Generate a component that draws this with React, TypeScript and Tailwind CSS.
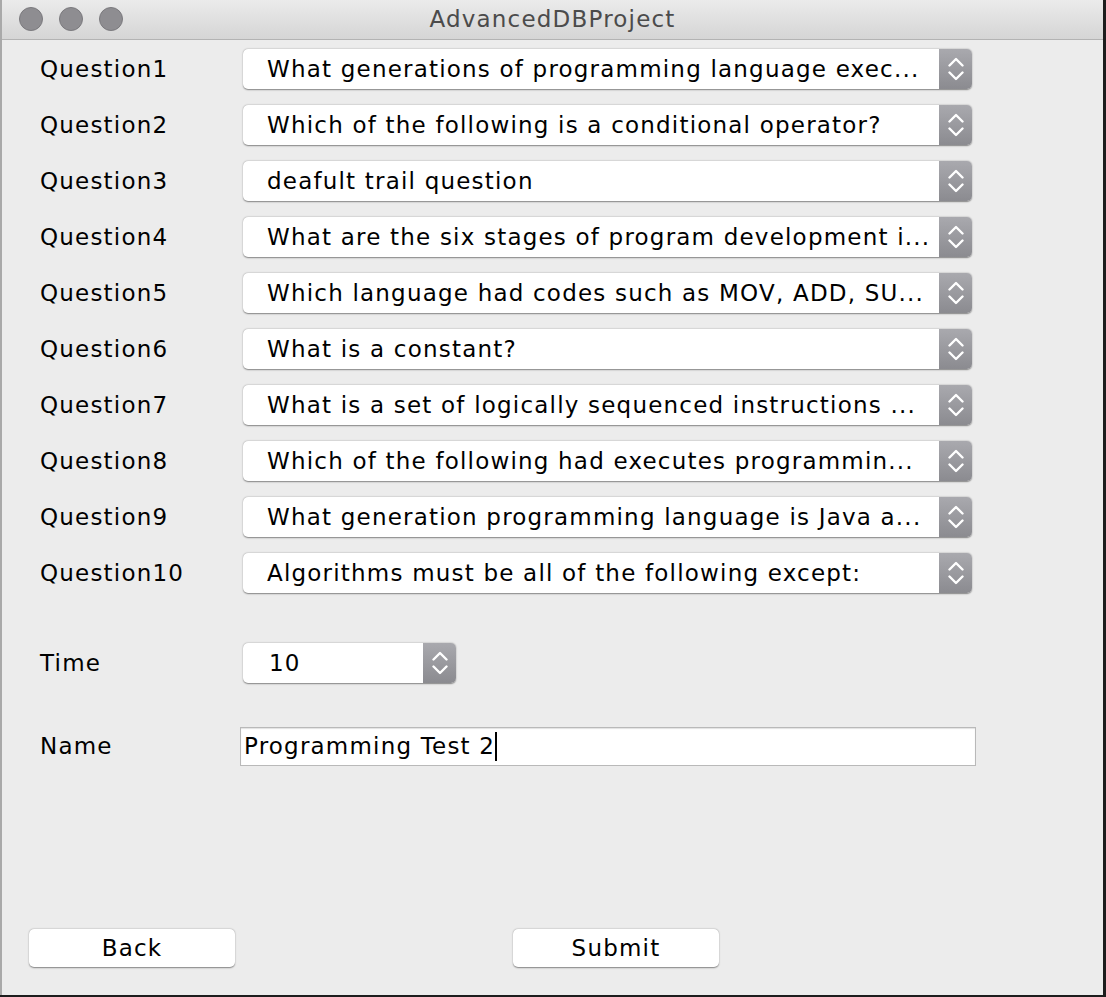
import React from 'react'

const questions = [
  'What generations of programming language exec...',
  'Which of the following is a conditional operator?',
  'deafult trail question',
  'What are the six stages of program development i...',
  'Which language had codes such as MOV, ADD, SU...',
  'What is a constant?',
  'What is a set of logically sequenced instructions ...',
  'Which of the following had executes programmin...',
  'What generation programming language is Java a...',
  'Algorithms must be all of the following except:',
]

function Arrows() {
  return (
    <svg width="16" height="26" viewBox="0 0 16 26" fill="none">
      <path d="M1.5 9.5 L8 3 L14.5 9.5" stroke="white" strokeWidth="2.4" strokeLinecap="round" strokeLinejoin="round" />
      <path d="M1.5 16.5 L8 23 L14.5 16.5" stroke="white" strokeWidth="2.4" strokeLinecap="round" strokeLinejoin="round" />
    </svg>
  )
}

function Combo({ value, width, pad }: { value: string; width: string; pad: string }) {
  return (
    <div
      className={`flex h-10 ${width} overflow-hidden rounded-[5px] bg-white shadow-[0_0.5px_1.5px_rgba(0,0,0,0.45)]`}
    >
      <div className={`flex min-w-0 flex-1 items-center ${pad} whitespace-nowrap text-black`}>{value}</div>
      <div className="flex w-[33px] items-center justify-center bg-gradient-to-b from-[#a9a9ae] to-[#8b8b90]">
        <Arrows />
      </div>
    </div>
  )
}

function Light() {
  return <div className="size-6 rounded-full border border-[#7b7a7e] bg-[#8e8d91]" />
}

export default function App() {
  return (
    <div className="h-[997px] w-[1106px] bg-[#1d1d1d] font-['DejaVu_Sans',sans-serif] text-[23px] tracking-[1.2px]">
      <div className="flex h-[995px] w-[1103px] flex-col border-l-[2px] border-[#a9a9a9] bg-[#ececec]">
        <div className="relative flex h-10 shrink-0 items-center justify-center border-b border-[#b3b3b3] bg-gradient-to-b from-[#ebebeb] to-[#d5d5d5]">
          <div className="absolute left-[17px] top-[7px] flex gap-4">
            <Light />
            <Light />
            <Light />
          </div>
          <span className="text-[#4b4b4b]">AdvancedDBProject</span>
        </div>

        <div className="flex flex-1 flex-col pl-[38px] pt-[9px]">
          <div className="flex flex-col gap-4">
            {questions.map((q, i) => (
              <div key={i} className="flex items-center">
                <div className="w-[203px] text-black">Question{i + 1}</div>
                <Combo value={q} width="w-[729px]" pad="pl-[24px]" />
              </div>
            ))}
          </div>

          <div className="mt-[50px] flex items-center">
            <div className="w-[203px] text-black">Time</div>
            <Combo value="10" width="w-[213px]" pad="pl-[26px]" />
          </div>

          <div className="mt-[44px] flex items-center">
            <div className="w-[200px] text-black">Name</div>
            <div className="flex h-[39px] w-[736px] items-center border border-[#b9b9b9] bg-white pl-[3px] text-black shadow-[inset_0_1px_1px_rgba(0,0,0,0.12)]">
              <span>Programming Test 2</span>
              <span className="h-[29px] w-[2px] bg-black" />
            </div>
          </div>

          <div className="mt-auto mb-[28px] flex">
            <button className="ml-[-11px] h-[38px] w-[206px] rounded-[5px] bg-white text-black shadow-[0_0.5px_1.5px_rgba(0,0,0,0.45)]">
              Back
            </button>
            <button className="ml-[278px] h-[38px] w-[206px] rounded-[5px] bg-white text-black shadow-[0_0.5px_1.5px_rgba(0,0,0,0.45)]">
              Submit
            </button>
          </div>
        </div>
      </div>
    </div>
  )
}
